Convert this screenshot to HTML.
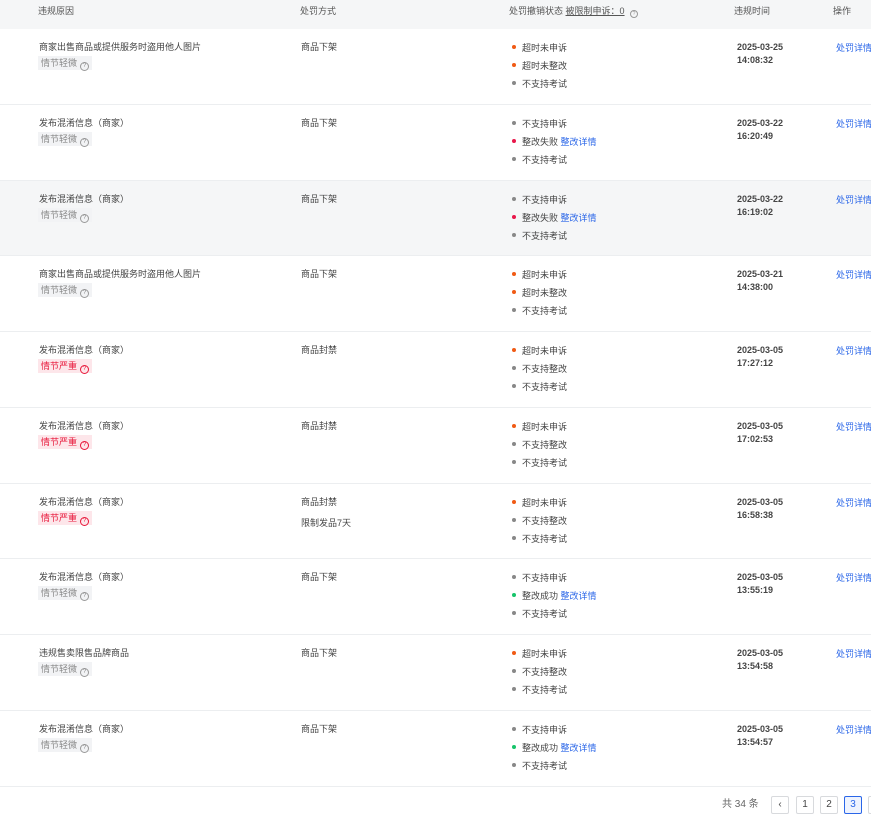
<!DOCTYPE html>
<html><head><meta charset="utf-8"><style>
*{margin:0;padding:0;box-sizing:border-box}
body{width:871px;height:825px;background:#fff;font-family:"Liberation Sans","Noto Sans CJK SC",sans-serif;font-size:9px;color:#444;position:relative;overflow:hidden}
.hd{position:absolute;left:0;top:0;width:871px;height:29px;background:#f5f6f7;color:#555}
.hd span{position:absolute;top:5px;line-height:12px}
.row{position:absolute;left:0;width:871px;height:76px;border-bottom:1px solid #eceef0}
.row.g{background:#f5f6f7}
.a{position:absolute;line-height:12px;white-space:nowrap}
.tag{position:absolute;left:38px;top:27px;height:14px;line-height:14px;padding:0 3px;background:#f2f3f5;color:#888;font-size:9px}
.tag.r{background:#fde6ea;color:#e8173a}
.q{display:inline-block;width:9px;height:9px;border:1px solid #999;border-radius:50%;font-size:6px;line-height:7px;text-align:center;margin-left:3px;vertical-align:-1px}
.tag.r .q{border-color:#e8173a}
.st{position:absolute;left:512px;line-height:12px;white-space:nowrap}
.d{display:inline-block;width:4px;height:4px;border-radius:50%;background:#888;margin-right:6px;vertical-align:2px}
.o{background:#f05a14}.p{background:#e8174a}.gr{background:#16c46a}
.l{color:#2a66e8}
.dt{position:absolute;left:737px;top:12px;line-height:13px;font-weight:bold;color:#444}
.pg{position:absolute;top:796px;height:18px;border:1px solid #d8dadd;border-radius:2px;text-align:center;line-height:16px;font-size:10px;color:#444;width:18px}
</style></head><body>
<div class="hd"><span style="left:38px">违规原因</span><span style="left:300px">处罚方式</span><span style="left:509px">处罚撤销状态 <u>被限制申诉：0</u> <span class="q" style="position:static;width:8px;height:8px;font-size:5px;line-height:6px;color:#999">?</span></span><span style="left:734px">违规时间</span><span style="left:833px">操作</span></div>

<div class="row" style="top:29px"><div class="a" style="left:39px;top:12px">商家出售商品或提供服务时盗用他人图片</div><div class="tag">情节轻微<span class="q">?</span></div><div class="a" style="left:301px;top:12px">商品下架</div><div class="st" style="top:13px"><i class="d o"></i>超时未申诉</div><div class="st" style="top:31px"><i class="d o"></i>超时未整改</div><div class="st" style="top:49px"><i class="d"></i>不支持考试</div><div class="dt">2025-03-25<br>14:08:32</div><div class="a l" style="left:836px;top:13px">处罚详情</div></div>

<div class="row" style="top:105px"><div class="a" style="left:39px;top:12px">发布混淆信息（商家）</div><div class="tag">情节轻微<span class="q">?</span></div><div class="a" style="left:301px;top:12px">商品下架</div><div class="st" style="top:13px"><i class="d"></i>不支持申诉</div><div class="st" style="top:31px"><i class="d p"></i>整改失败 <span class="l">整改详情</span></div><div class="st" style="top:49px"><i class="d"></i>不支持考试</div><div class="dt">2025-03-22<br>16:20:49</div><div class="a l" style="left:836px;top:13px">处罚详情</div></div>

<div class="row g" style="top:181px;height:75px"><div class="a" style="left:39px;top:12px">发布混淆信息（商家）</div><div class="tag">情节轻微<span class="q">?</span></div><div class="a" style="left:301px;top:12px">商品下架</div><div class="st" style="top:13px"><i class="d"></i>不支持申诉</div><div class="st" style="top:31px"><i class="d p"></i>整改失败 <span class="l">整改详情</span></div><div class="st" style="top:49px"><i class="d"></i>不支持考试</div><div class="dt">2025-03-22<br>16:19:02</div><div class="a l" style="left:836px;top:13px">处罚详情</div></div>

<div class="row" style="top:256px"><div class="a" style="left:39px;top:12px">商家出售商品或提供服务时盗用他人图片</div><div class="tag">情节轻微<span class="q">?</span></div><div class="a" style="left:301px;top:12px">商品下架</div><div class="st" style="top:13px"><i class="d o"></i>超时未申诉</div><div class="st" style="top:31px"><i class="d o"></i>超时未整改</div><div class="st" style="top:49px"><i class="d"></i>不支持考试</div><div class="dt">2025-03-21<br>14:38:00</div><div class="a l" style="left:836px;top:13px">处罚详情</div></div>

<div class="row" style="top:332px"><div class="a" style="left:39px;top:12px">发布混淆信息（商家）</div><div class="tag r">情节严重<span class="q">?</span></div><div class="a" style="left:301px;top:12px">商品封禁</div><div class="st" style="top:13px"><i class="d o"></i>超时未申诉</div><div class="st" style="top:31px"><i class="d"></i>不支持整改</div><div class="st" style="top:49px"><i class="d"></i>不支持考试</div><div class="dt">2025-03-05<br>17:27:12</div><div class="a l" style="left:836px;top:13px">处罚详情</div></div>

<div class="row" style="top:408px"><div class="a" style="left:39px;top:12px">发布混淆信息（商家）</div><div class="tag r">情节严重<span class="q">?</span></div><div class="a" style="left:301px;top:12px">商品封禁</div><div class="st" style="top:13px"><i class="d o"></i>超时未申诉</div><div class="st" style="top:31px"><i class="d"></i>不支持整改</div><div class="st" style="top:49px"><i class="d"></i>不支持考试</div><div class="dt">2025-03-05<br>17:02:53</div><div class="a l" style="left:836px;top:13px">处罚详情</div></div>

<div class="row" style="top:484px;height:75px"><div class="a" style="left:39px;top:12px">发布混淆信息（商家）</div><div class="tag r">情节严重<span class="q">?</span></div><div class="a" style="left:301px;top:12px">商品封禁</div><div class="a" style="left:301px;top:33px">限制发品7天</div><div class="st" style="top:13px"><i class="d o"></i>超时未申诉</div><div class="st" style="top:31px"><i class="d"></i>不支持整改</div><div class="st" style="top:49px"><i class="d"></i>不支持考试</div><div class="dt">2025-03-05<br>16:58:38</div><div class="a l" style="left:836px;top:13px">处罚详情</div></div>

<div class="row" style="top:559px"><div class="a" style="left:39px;top:12px">发布混淆信息（商家）</div><div class="tag">情节轻微<span class="q">?</span></div><div class="a" style="left:301px;top:12px">商品下架</div><div class="st" style="top:13px"><i class="d"></i>不支持申诉</div><div class="st" style="top:31px"><i class="d gr"></i>整改成功 <span class="l">整改详情</span></div><div class="st" style="top:49px"><i class="d"></i>不支持考试</div><div class="dt">2025-03-05<br>13:55:19</div><div class="a l" style="left:836px;top:13px">处罚详情</div></div>

<div class="row" style="top:635px"><div class="a" style="left:39px;top:12px">违规售卖限售品牌商品</div><div class="tag">情节轻微<span class="q">?</span></div><div class="a" style="left:301px;top:12px">商品下架</div><div class="st" style="top:13px"><i class="d o"></i>超时未申诉</div><div class="st" style="top:31px"><i class="d"></i>不支持整改</div><div class="st" style="top:49px"><i class="d"></i>不支持考试</div><div class="dt">2025-03-05<br>13:54:58</div><div class="a l" style="left:836px;top:13px">处罚详情</div></div>

<div class="row" style="top:711px"><div class="a" style="left:39px;top:12px">发布混淆信息（商家）</div><div class="tag">情节轻微<span class="q">?</span></div><div class="a" style="left:301px;top:12px">商品下架</div><div class="st" style="top:13px"><i class="d"></i>不支持申诉</div><div class="st" style="top:31px"><i class="d gr"></i>整改成功 <span class="l">整改详情</span></div><div class="st" style="top:49px"><i class="d"></i>不支持考试</div><div class="dt">2025-03-05<br>13:54:57</div><div class="a l" style="left:836px;top:13px">处罚详情</div></div>

<div class="a" style="left:722px;top:798px;font-size:10px;color:#666;line-height:14px">共 34 条</div>
<div class="pg" style="left:771px">&lsaquo;</div>
<div class="pg" style="left:796px">1</div>
<div class="pg" style="left:820px">2</div>
<div class="pg" style="left:844px;border-color:#2a66e8;color:#2a66e8;background:#eef3fe">3</div>
<div class="pg" style="left:868px"></div>
</body></html>
